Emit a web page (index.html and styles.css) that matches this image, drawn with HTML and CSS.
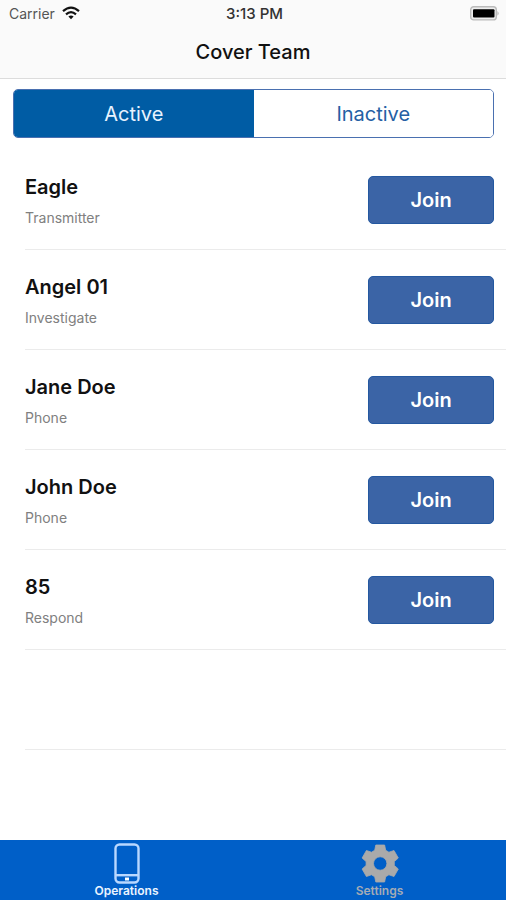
FILE: index.html
```html
<!DOCTYPE html>
<html lang="en">
<head>
<meta charset="utf-8">
<meta name="viewport" content="width=device-width, initial-scale=1">
<title>Cover Team</title>
<link rel="stylesheet" href="styles.css">
</head>
<body>
<div class="app">
  <header class="header">
    <div class="status">
      <span class="carrier">Carrier
        <svg class="wifi" width="18" height="14" viewBox="0 0 18 14" fill="none" stroke="#111" stroke-width="2.2" aria-hidden="true">
          <path d="M1 5.2Q9-1.8 17 5.2M4 8.4Q9 4 14 8.4"/>
          <path d="M6.4 10.6Q9 8.6 11.6 10.6L9 13.3Z" fill="#111" stroke="none"/>
        </svg>
      </span>
      <time class="clock">3:13 PM</time>
      <svg class="battery" width="30" height="15" viewBox="0 0 30 15" aria-hidden="true">
        <rect x=".7" y=".7" width="25.6" height="13.2" rx="3" fill="#eee" stroke="#bbb" stroke-width="1.4"/>
        <rect x="3" y="3.2" width="21.5" height="8.2" rx="1" fill="#000"/>
        <path d="M27.5 5q2.2 2.4 0 4.8z" fill="#aaa"/>
      </svg>
    </div>
    <h1 class="title">Cover Team</h1>
  </header>
  <main class="main">
    <div class="segments">
      <button class="segment selected" type="button" aria-pressed="true">Active</button>
      <button class="segment" type="button" aria-pressed="false">Inactive</button>
    </div>
    <ul class="list">
      <li class="row"><div class="person"><h2 class="name">Eagle</h2><p class="role">Transmitter</p></div><button class="join" type="button">Join</button></li>
      <li class="row"><div class="person"><h2 class="name">Angel 01</h2><p class="role">Investigate</p></div><button class="join" type="button">Join</button></li>
      <li class="row"><div class="person"><h2 class="name">Jane Doe</h2><p class="role">Phone</p></div><button class="join" type="button">Join</button></li>
      <li class="row"><div class="person"><h2 class="name">John Doe</h2><p class="role">Phone</p></div><button class="join" type="button">Join</button></li>
      <li class="row"><div class="person"><h2 class="name">85</h2><p class="role">Respond</p></div><button class="join" type="button">Join</button></li>
      <li class="row" aria-hidden="true"></li>
    </ul>
  </main>
  <nav class="tabs">
    <a class="tab current" href="#operations" aria-current="page">
      <svg width="40" height="42" viewBox="0 0 40 42" fill="none" stroke="#b9d8ff" stroke-width="2.4" aria-hidden="true">
        <rect x="8.5" y="2.5" width="23" height="38" rx="4"/>
        <path d="M8.5 33.2h23"/>
        <path d="M18 37h4" stroke="#fff" stroke-width="3"/>
      </svg>
      <span>Operations</span>
    </a>
    <a class="tab" href="#settings">
      <svg width="40" height="42" viewBox="0 0 40 42" fill="#aaa" aria-hidden="true">
        <path fill-rule="evenodd" d="M15.8 3h8.8l1.1 5.3 3.2 1.9 5.1-1.7 4.3 7.5-4 3.6v3.8l4 3.6-4.3 7.5-5.1-1.7-3.2 1.9-1.1 5.3h-8.8l-1.1-5.3-3.2-1.9-5.1 1.7-4.3-7.5 4-3.6v-3.8l-4-3.6L6.4 8.5l5.1 1.7 3.2-1.9zM20.2 14.8a6.7 6.7 0 1 0 0 13.4 6.7 6.7 0 1 0 0-13.4z" stroke="#aaa" stroke-width=".8" stroke-linejoin="round"/>
      </svg>
      <span>Settings</span>
    </a>
  </nav>
</div>
</body>
</html>
```

FILE: styles.css
```css
* {
  box-sizing: border-box;
}

body {
  margin: 0;
  background: #fff;
  color: #111;
  font-family: Inter, "Liberation Sans", sans-serif;
}

h1, h2, p, ul {
  margin: 0;
  padding: 0;
}

button {
  font-family: inherit;
  cursor: pointer;
}

.app {
  display: flex;
  flex-direction: column;
  min-height: 100vh;
}

.header {
  background: #fafafa;
  border-bottom: 1px solid #dcdcdc;
}

.status {
  display: grid;
  grid-template-columns: 1fr auto 1fr;
  align-items: center;
  height: 26px;
  padding: 0 6px 0 9px;
  font-size: 14px;
}

.carrier {
  display: flex;
  align-items: center;
  gap: 7px;
  color: #555;
}

.clock {
  font-size: 15px;
  font-weight: 500;
  color: #333;
}

.battery {
  justify-self: end;
}

.title {
  height: 52px;
  line-height: 52px;
  text-align: center;
  font-size: 20px;
  font-weight: 500;
}

.main {
  flex: 1;
}

.segments {
  display: flex;
  margin: 10px 12px 12px 13px;
  height: 49px;
  border: 1px solid #4a70b0;
  border-radius: 5px;
  overflow: hidden;
}

.segment {
  flex: 1;
  padding: 0;
  border: 0;
  background: #fff;
  color: #2460a4;
  font-size: 20px;
}

.segment.selected {
  background: #005ca4;
  color: #e8f3ff;
}

.list {
  margin-left: 25px;
  list-style: none;
}

.row {
  display: flex;
  align-items: center;
  justify-content: space-between;
  height: 100px;
  padding-right: 12px;
  border-bottom: 1px solid #ebebeb;
}

.person {
  padding-top: 2px;
}

.name {
  font-size: 20px;
  line-height: 26px;
  font-weight: 600;
}

.role {
  margin-top: 8px;
  font-size: 14px;
  line-height: 20px;
  color: #808080;
}

.join {
  width: 126px;
  height: 48px;
  border: 1px solid #2458a0;
  border-radius: 5px;
  background: #3b64a6;
  color: #fff;
  font-size: 20px;
  font-weight: 600;
}

.tabs {
  display: flex;
  height: 60px;
  background: #005fc8;
}

.tab {
  flex: 1;
  display: flex;
  flex-direction: column;
  align-items: center;
  padding-top: 2px;
  color: #a5abb5;
  font-size: 12px;
  line-height: 14px;
  font-weight: 600;
  text-decoration: none;
}

.tab.current {
  color: #eaf4ff;
}
```
